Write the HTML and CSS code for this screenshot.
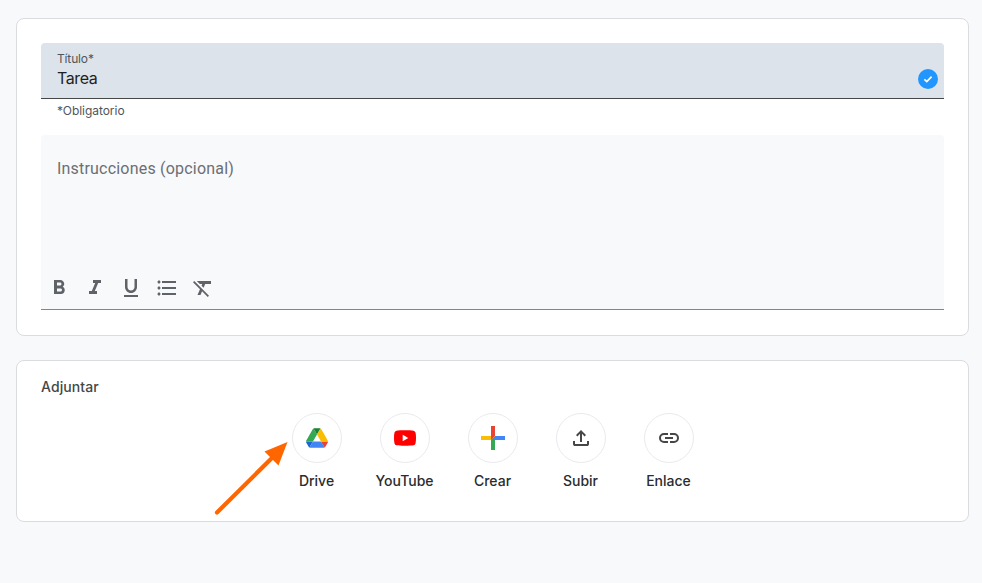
FILE: index.html
```html
<!DOCTYPE html>
<html lang="es">
<head>
    <meta charset="UTF-8">
    <meta name="viewport" content="width=device-width, initial-scale=1.0">
    <title>Tarea</title>
    <link rel="stylesheet" href="styles.css">
</head>
<body>
    <main class="page">
        <section class="card details">
            <label class="field">
                <span class="field-text">
                    <span class="field-label">Título*</span>
                    <input class="field-input" type="text" value="Tarea">
                </span>
                <svg class="check" width="20" height="20" viewBox="0 0 20 20">
                    <circle cx="10" cy="10" r="10" fill="#2196ff"/>
                    <path d="M6.4 10.3l2.4 2.3 4.8-5" fill="none" stroke="#fff" stroke-width="1.7"/>
                </svg>
            </label>
            <p class="helper">*Obligatorio</p>

            <div class="editor">
                <div class="editor-text">Instrucciones (opcional)</div>
                <div class="toolbar">
                    <svg viewBox="0 0 24 24"><path d="M15.6 10.79c.97-.67 1.65-1.77 1.65-2.79 0-2.26-1.75-4-4-4H7v14h7.04c2.09 0 3.71-1.7 3.71-3.79 0-1.52-.86-2.82-2.15-3.42zM10 6.5h3c.83 0 1.5.67 1.5 1.5s-.67 1.5-1.5 1.5h-3v-3zm3.5 9H10v-3h3.5c.83 0 1.5.67 1.5 1.5s-.67 1.5-1.5 1.5z"/></svg>
                    <svg viewBox="0 0 24 24"><path d="M10 4v3h2.21l-3.42 8H6v3h8v-3h-2.21l3.42-8H18V4z"/></svg>
                    <svg viewBox="0 0 24 24"><path d="M12 17c3.31 0 6-2.69 6-6V3h-2.5v8c0 1.93-1.57 3.5-3.5 3.5S8.5 12.93 8.5 11V3H6v8c0 3.31 2.69 6 6 6zm-7 2v2h14v-2H5z"/></svg>
                    <svg viewBox="0 0 24 24"><path d="M4 10.5c-.83 0-1.5.67-1.5 1.5s.67 1.5 1.5 1.5 1.5-.67 1.5-1.5-.67-1.5-1.5-1.5zm0-6c-.83 0-1.5.67-1.5 1.5S3.17 7.5 4 7.5 5.5 6.83 5.5 6 4.83 4.5 4 4.5zm0 12c-.83 0-1.5.68-1.5 1.5s.68 1.5 1.5 1.5 1.5-.68 1.5-1.5-.67-1.5-1.5-1.5zM7 19h14v-2H7v2zm0-6h14v-2H7v2zm0-8v2h14V5H7z"/></svg>
                    <svg viewBox="0 0 24 24"><path d="M3.27 5L2 6.27l6.97 6.97L6.5 19h3l1.57-3.66L16.73 21 18 19.73 3.55 5.27 3.27 5zM6 5v.18L8.82 8h2.4l-.72 1.68 2.1 2.1L14.21 8H20V5H6z"/></svg>
                </div>
            </div>
        </section>

        <section class="card attach">
            <h2 class="attach-title">Adjuntar</h2>
            <div class="attach-list">
                <div class="attach-item">
                    <span class="circle">
                        <svg width="22" height="20" viewBox="0 0 87.3 78">
                            <path d="m6.6 66.85 3.85 6.65c.8 1.4 1.95 2.5 3.3 3.3l13.75-23.8h-27.5c0 1.55.4 3.1 1.2 4.5z" fill="#1967d2"/>
                            <path d="m43.65 25-13.75-23.8c-1.35.8-2.5 1.9-3.3 3.3l-25.4 44a9.06 9.06 0 0 0 -1.2 4.5h27.5z" fill="#34a853"/>
                            <path d="m73.55 76.8c1.35-.8 2.5-1.9 3.3-3.3l1.6-2.75 7.65-13.25c.8-1.4 1.2-2.95 1.2-4.5h-27.502l5.852 11.5z" fill="#ea4335"/>
                            <path d="m43.65 25 13.75-23.8c-1.35-.8-2.9-1.2-4.5-1.2h-18.5c-1.6 0-3.15.45-4.5 1.2z" fill="#188038"/>
                            <path d="m59.8 53h-32.3l-13.75 23.8c1.35.8 2.9 1.2 4.5 1.2h50.8c1.6 0 3.15-.45 4.5-1.2z" fill="#4285f4"/>
                            <path d="m73.4 26.5-12.7-22c-.8-1.4-1.95-2.5-3.3-3.3l-13.75 23.8 16.15 28h27.45c0-1.55-.4-3.1-1.2-4.5z" fill="#fbbc04"/>
                        </svg>
                    </span>
                    <span class="attach-label">Drive</span>
                </div>
                <div class="attach-item">
                    <span class="circle">
                        <svg width="22" height="16" viewBox="0 0 22 16">
                            <path d="M21.5 2.6A2.8 2.8 0 0 0 19.6.7C17.8.3 14.5.3 11 .3S4.2.3 2.4.7A2.8 2.8 0 0 0 .5 2.6C.1 4.3 0 6 0 8s.1 3.7.5 5.4a2.8 2.8 0 0 0 1.9 1.9c1.800.4 5.1.4 8.6.4s6.8 0 8.6-.4a2.8 2.8 0 0 0 1.9-1.9c.4-1.7.5-3.4.5-5.4s-.1-3.7-.5-5.4z" fill="#f00"/>
                            <path d="M8.7 4.8v6.4L14.3 8z" fill="#fff"/>
                        </svg>
                    </span>
                    <span class="attach-label">YouTube</span>
                </div>
                <div class="attach-item">
                    <span class="circle">
                        <svg width="36" height="36" viewBox="0 0 36 36">
                            <path d="M16 16v14h4V20z" fill="#34a853"/>
                            <path d="M30 16H20l-4 4h14z" fill="#4285f4"/>
                            <path d="M6 16v4h10l4-4z" fill="#fbbc05"/>
                            <path d="M20 16V6h-4v14z" fill="#ea4335"/>
                        </svg>
                    </span>
                    <span class="attach-label">Crear</span>
                </div>
                <div class="attach-item">
                    <span class="circle">
                        <svg width="24" height="24" viewBox="0 -960 960 960"><path d="M440-320v-326L336-542l-56-58 200-200 200 200-56 58-104-104v326h-80ZM240-160q-33 0-56.5-23.5T160-240v-120h80v120h480v-120h80v120q0 33-23.5 56.5T720-160H240Z"/></svg>
                    </span>
                    <span class="attach-label">Subir</span>
                </div>
                <div class="attach-item">
                    <span class="circle">
                        <svg width="24" height="24" viewBox="0 0 24 24"><path d="M11 17H7a5 5 0 0 1 0-10h4v2H7a3 3 0 0 0 0 6h4zM8 13v-2h8v2zM13 17v-2h4a3 3 0 0 0 0-6h-4V7h4a5 5 0 0 1 0 10z"/></svg>
                    </span>
                    <span class="attach-label">Enlace</span>
                </div>
            </div>
            <!-- flecha que señala Drive -->
            <svg class="arrow" width="76" height="76" viewBox="0 0 76 76">
                <path d="M4 71.500L62 14" stroke="#ff6600" stroke-width="4.2" stroke-linecap="round"/>
                <path d="M74.5 1L51.5 10.5 65.5 24.5z" fill="#ff6600"/>
            </svg>
        </section>
    </main>
</body>
</html>
```

FILE: styles.css
```css
* {
    box-sizing: border-box;
}
body {
    margin: 0;
    background: #f8f9fb;
    font-family: Inter, Roboto, sans-serif;
    color: #202124;
}
.page {
    display: flex;
    flex-direction: column;
    gap: 24px;
    padding: 18px 13px 0 16px;
}
.card {
    background: #fff;
    border: 1px solid #dadce0;
    border-radius: 8px;
    padding: 24px;
}
.details {
    height: 318px;
}

/* Campo de título */
.field {
    display: flex;
    justify-content: space-between;
    height: 56px;
    padding: 8px 6px 0 16px;
    background: #dde3ea;
    border-bottom: 1px solid #444746;
    border-radius: 4px 4px 0 0;
}
.field-text {
    display: flex;
    flex-direction: column;
}
.field-label {
    font-size: 12px;
    line-height: 16px;
    letter-spacing: -0.15px;
    color: #50555b;
}
.field-input {
    width: 300px;
    height: 22px;
    padding: 0;
    border: none;
    outline: none;
    background: transparent;
    font-family: inherit;
    font-size: 16px;
    letter-spacing: -0.4px;
    color: #1f1f1f;
}
.check {
    margin-top: 18px;
}
.helper {
    margin: 4px 16px 0;
    font-size: 12px;
    line-height: 16px;
    letter-spacing: -0.05px;
    color: #50555b;
}

/* Editor de instrucciones */
.editor {
    display: flex;
    flex-direction: column;
    justify-content: space-between;
    height: 175px;
    margin-top: 16px;
    padding: 22px 6px 9px;
    background: #f8f9fb;
    border-bottom: 1px solid #80868b;
    border-radius: 4px 4px 0 0;
}
.editor-text {
    padding-left: 10px;
    font-family: Roboto, sans-serif;
    font-size: 16px;
    line-height: 24px;
    letter-spacing: 0.2px;
    color: #6b6f73;
}
.toolbar {
    display: flex;
    gap: 12px;
}
.toolbar svg {
    width: 24px;
    height: 24px;
    fill: #5f6368;
}

/* Adjuntar */
.attach {
    position: relative;
    height: 162px;
    padding-top: 16px;
}
.attach-title {
    margin: 0;
    font-size: 14px;
    font-weight: 500;
    line-height: 20px;
    letter-spacing: 0.1px;
    color: #444746;
}
.attach-list {
    display: flex;
    justify-content: center;
    margin-top: 16px;
    padding-left: 1px;
}
.attach-item {
    display: flex;
    flex-direction: column;
    align-items: center;
    width: 88px;
}
.circle {
    display: flex;
    align-items: center;
    justify-content: center;
    width: 50px;
    height: 50px;
    border: 1px solid #e8eaed;
    border-radius: 50%;
    fill: #444746;
}
.attach-label {
    margin: 8px 1px 0 0;
    font-size: 14px;
    font-weight: 500;
    line-height: 20px;
    color: #2b2c2e;
}
.arrow {
    position: absolute;
    left: 196px;
    top: 80px;
}
```
